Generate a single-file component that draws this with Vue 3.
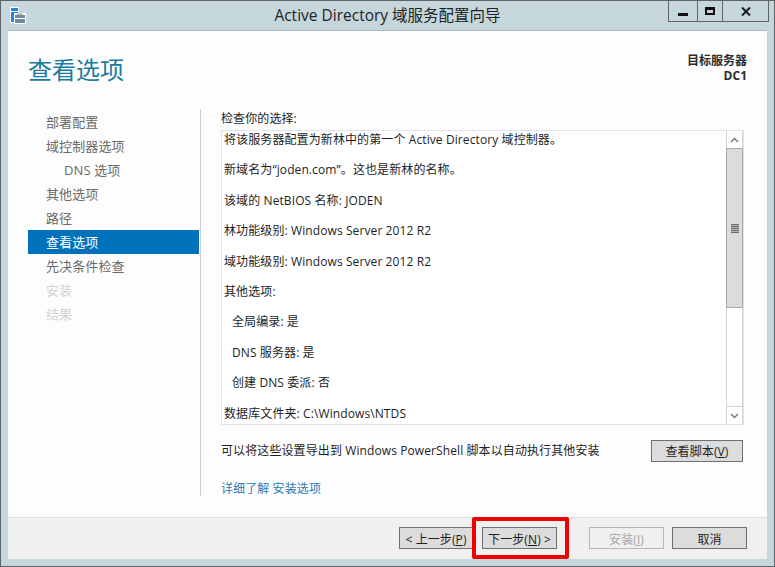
<script setup>
const steps = [
  { label: '部署配置' },
  { label: '域控制器选项' },
  { label: 'DNS 选项', sub: true },
  { label: '其他选项' },
  { label: '路径' },
  { label: '查看选项', active: true },
  { label: '先决条件检查' },
  { label: '安装', off: true },
  { label: '结果', off: true }
]
const lines = [
  { t: '将该服务器配置为新林中的第一个 Active Directory 域控制器。' },
  { t: '新域名为“joden.com”。这也是新林的名称。' },
  { t: '该域的 NetBIOS 名称: JODEN' },
  { t: '林功能级别: Windows Server 2012 R2' },
  { t: '域功能级别: Windows Server 2012 R2' },
  { t: '其他选项:' },
  { t: '全局编录: 是', sub: true },
  { t: 'DNS 服务器: 是', sub: true },
  { t: '创建 DNS 委派: 否', sub: true },
  { t: '数据库文件夹: C:\\Windows\\NTDS' }
]
</script>

<template>
  <div class="window">
    <header class="titlebar">
      <svg class="appicon" width="17" height="17" viewBox="0 0 17 17">
        <rect x="0" y="0" width="9" height="16" fill="#fff" />
        <rect x="1" y="1" width="7" height="3" fill="#1e86dc" />
        <rect x="1" y="5" width="7" height="10" fill="#1e86dc" />
        <rect x="4" y="6" width="12" height="11" fill="#fff" />
        <rect x="8" y="6" width="4" height="3" fill="#fff" />
        <rect x="5" y="8" width="10" height="8" fill="#6f8b9f" />
        <path d="M8 8V7h4v1" stroke="#6f8b9f" stroke-width="1" fill="none" />
        <rect x="5" y="11" width="10" height="1" fill="#fff" />
      </svg>
      <div class="title">Active Directory 域服务配置向导</div>
      <div class="controls">
        <div class="ctl ctl-min"><span class="min-bar"></span></div>
        <div class="ctl ctl-max"><span class="max-box"></span></div>
        <div class="ctl ctl-close">
          <svg width="10" height="9" viewBox="0 0 10 9"><path d="M1 0.500l8 8M9 0.500l-8 8" stroke="#1c1c1c" stroke-width="2" fill="none" /></svg>
        </div>
      </div>
    </header>

    <div class="client">
      <main class="body">
        <div class="head">
          <h1 class="page-title">查看选项</h1>
          <div class="target">
            <div>目标服务器</div>
            <div class="target-name">DC1</div>
          </div>
        </div>

        <div class="columns">
          <nav class="nav">
            <div
              v-for="s in steps"
              :key="s.label"
              class="step"
              :class="{ sub: s.sub, active: s.active, off: s.off }"
            >{{ s.label }}</div>
          </nav>

          <section class="panel">
            <div class="panel-label">检查你的选择:</div>
            <div class="listbox">
              <div class="list-text">
                <p v-for="l in lines" :key="l.t" :class="{ sub: l.sub }">{{ l.t }}</p>
              </div>
              <div class="scrollbar">
                <div class="arrow">
                  <svg width="9" height="6" viewBox="0 0 9 6"><path d="M1 5l3.500-3.500L8 5" stroke="#7a7a7a" stroke-width="1.500" fill="none" /></svg>
                </div>
                <div class="thumb"><span class="grip"></span></div>
                <div class="track"></div>
                <div class="arrow arrow-down">
                  <svg width="9" height="6" viewBox="0 0 9 6"><path d="M1 1l3.500 3.500L8 1" stroke="#7a7a7a" stroke-width="1.500" fill="none" /></svg>
                </div>
              </div>
            </div>
            <div class="export">
              <span>可以将这些设置导出到 Windows PowerShell 脚本以自动执行其他安装</span>
              <button class="btn btn-script">查看脚本(<u>V</u>)</button>
            </div>
            <a class="more">详细了解 安装选项</a>
          </section>
        </div>
      </main>

      <footer class="footer">
        <button class="btn btn-prev">&lt; 上一步(<u>P</u>)</button>
        <button class="btn btn-next">下一步(<u>N</u>) &gt;</button>
        <button class="btn btn-install" disabled>安装(<u>I</u>)</button>
        <button class="btn btn-cancel">取消</button>
        <div class="highlight"></div>
      </footer>
    </div>
  </div>
</template>

<style scoped>
.window {
  width: 775px;
  height: 567px;
  box-sizing: border-box;
  border: 1px solid #5f6469;
  background: #c5d6dc;
  display: flex;
  flex-direction: column;
  font-family: "Open Sans", "Noto Sans CJK SC", sans-serif;
  font-size: 12px;
  letter-spacing: 0.1px;
  color: #1e1e1e;
  overflow: hidden;
}
.titlebar {
  height: 29px;
  flex: none;
  position: relative;
  display: flex;
  align-items: flex-start;
  padding-left: 9px;
}
.appicon { margin-top: 6px; flex: none; }
.title {
  position: absolute;
  left: 0;
  right: 0;
  top: 4px;
  text-align: center;
  font-size: 15.5px;
  letter-spacing: 0;
  line-height: 20px;
  color: #222;
}
.controls {
  position: absolute;
  right: 5px;
  top: -1px;
  height: 22px;
  display: flex;
  border: 1px solid #5f6469;
  box-sizing: border-box;
}
.ctl {
  display: flex;
  align-items: center;
  justify-content: center;
  border-left: 1px solid #5f6469;
  box-sizing: border-box;
}
.ctl-min { width: 28px; border-left: 0; }
.ctl-max { width: 25px; }
.ctl-close { width: 46px; }
.min-bar { width: 10px; height: 3px; background: #111; margin-top: 7px; }
.max-box {
  width: 6px;
  height: 3px;
  border: 2px solid #111;
  border-top-width: 3px;
  box-sizing: content-box;
}
.client {
  flex: 1;
  margin: 0 7px 7px 7px;
  display: flex;
  flex-direction: column;
  background: #fdfdfd;
  border-top: 1px solid #a9b8c0;
  min-height: 0;
}
.body {
  flex: 1;
  min-height: 0;
  padding: 0 20px;
  display: flex;
  flex-direction: column;
}
.head {
  height: 78px;
  flex: none;
  display: flex;
  justify-content: space-between;
  align-items: flex-start;
}
.page-title {
  margin: 21px 0 0;
  font-size: 24px;
  letter-spacing: 0;
  line-height: 36px;
  font-weight: 400;
  color: #1a7b9c;
}
.target {
  margin-top: 22px;
  text-align: right;
  font-weight: 700;
  line-height: 15px;
  color: #2c2c2c;
  font-size: 12px;
  letter-spacing: 0;
}
.columns {
  display: flex;
  flex: 1;
  min-height: 0;
}
.nav {
  width: 172px;
  flex: none;
  border-right: 1px solid #cfcfcf;
  box-sizing: content-box;
  height: 386px;
  padding-top: 1px;
}
.step {
  height: 24px;
  line-height: 24px;
  padding-left: 18px;
  font-size: 13px;
  color: #6a6a6a;
  margin-right: 1px;
}
.step.sub { padding-left: 36px; }
.step.active { background: #0072bc; color: #fff; }
.step.off { color: #d2d2d2; }
.panel {
  flex: 1;
  padding-left: 20px;
  display: flex;
  flex-direction: column;
  min-width: 0;
}
.panel-label {
  height: 19px;
  padding-top: 2px;
  line-height: 16px;
  color: #1e1e1e;
}
.listbox {
  width: 523px;
  height: 295px;
  box-sizing: border-box;
  border: 1px solid #e2e2ea;
  background: #fff;
  display: flex;
  flex: none;
}
.list-text {
  flex: 1;
  overflow: hidden;
  padding: 1px 1px 0 2px;
}
.list-text p {
  margin: 0;
  height: 30.4px;
  line-height: 16px;
  white-space: nowrap;
}
.list-text p.sub { padding-left: 8px; }
.scrollbar {
  width: 17px;
  flex: none;
  display: flex;
  flex-direction: column;
  box-sizing: border-box;
  border-left: 1px solid #d4d4d4;
  border-right: 1px solid #d4d4d4;
}
.arrow {
  height: 17px;
  flex: none;
  display: flex;
  align-items: center;
  justify-content: center;
  background: #fff;
}
.arrow-down { border-top: 1px solid #d4d4d4; }
.thumb {
  height: 158px;
  flex: none;
  background: #dcdcdc;
  border: 1px solid #a8a8a8;
  margin: 0 -1px;
  display: flex;
  align-items: center;
  justify-content: center;
}
.grip {
  width: 8px;
  height: 9px;
  background: repeating-linear-gradient(#6e6e6e 0 1px, #b4b4b4 1px 2px);
}
.track { flex: 1; }
.export {
  height: 55px;
  display: flex;
  align-items: center;
  justify-content: space-between;
  width: 522px;
  flex: none;
}
.export span { margin-top: -6px; }
.btn {
  font: inherit;
  height: 22px;
  box-sizing: border-box;
  border: 1px solid #707070;
  background: #dcdcdc;
  color: #1e1e1e;
  padding: 0;
  border-radius: 0;
  white-space: nowrap;
  letter-spacing: 0.1px;
}
.btn-script { width: 92px; margin-top: -3px; }
.more { color: #2a7ab8; line-height: 16px; margin-top: 1px; }
.footer {
  height: 42px;
  flex: none;
  background: #f0f0f0;
  border-top: 1px solid #dfdfdf;
  box-sizing: border-box;
  display: flex;
  align-items: flex-start;
  padding: 9px 0 0 391px;
  position: relative;
}
.footer .btn { padding-top: 1px; }
.btn-prev { width: 74px; }
.btn-next { width: 75px; margin-left: 9px; }
.btn-install { width: 75px; margin-left: 32px; background: #f0f0f0; border-color: #b8b8b8; color: #a6a6a6; }
.footer .btn-install { background: #f0f0f0; }
.btn-cancel { width: 75px; margin-left: 8px; }
.highlight {
  position: absolute;
  left: 464px;
  top: -1px;
  width: 97px;
  height: 42px;
  box-sizing: border-box;
  border: 4px solid #f00000;
  border-radius: 2px;
}
</style>

<style>
html, body { margin: 0; background: #fff; }
</style>
